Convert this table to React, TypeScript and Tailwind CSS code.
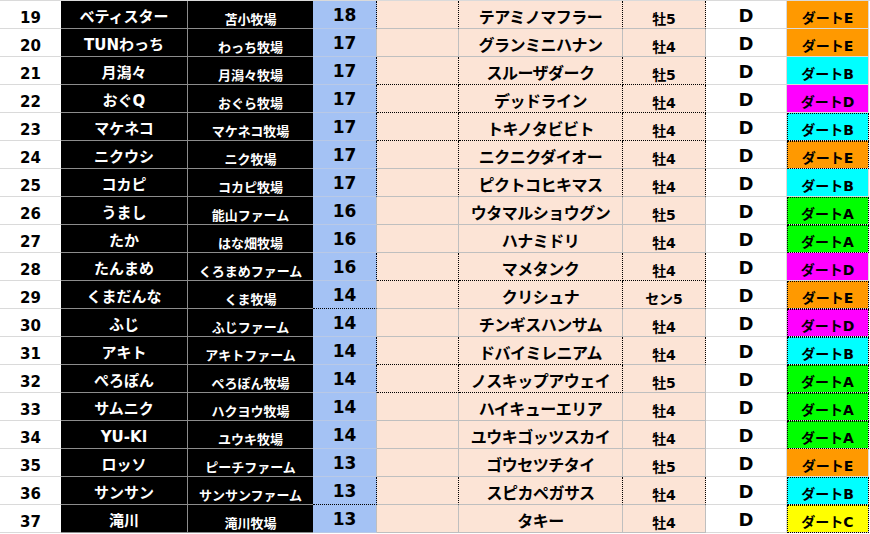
import React from "react";
import clsx from "clsx";

type Row = {
  n: number;
  name: string;
  farm: string;
  pt: number;
  horse: string;
  sex: string;
  dart: string;
  color: "o" | "c" | "m" | "g" | "y";
  v: string; // blueR, blankR, horseR, sexR dotted
  hb: string; // blueB, blankB, horseB, sexB dotted
  dd: boolean;
};

const rows: Row[] = [
  { n: 19, name: "ベティスター", farm: "苫小牧場", pt: 18, horse: "テアミノマフラー", sex: "牡5", dart: "ダートE", color: "o", v: "1111", hb: "0000", dd: false },
  { n: 20, name: "TUNわっち", farm: "わっち牧場", pt: 17, horse: "グランミニハナン", sex: "牡4", dart: "ダートE", color: "o", v: "0000", hb: "0000", dd: false },
  { n: 21, name: "月潟々", farm: "月潟々牧場", pt: 17, horse: "スルーザダーク", sex: "牡5", dart: "ダートB", color: "c", v: "1111", hb: "0111", dd: false },
  { n: 22, name: "おぐQ", farm: "おぐら牧場", pt: 17, horse: "デッドライン", sex: "牡4", dart: "ダートD", color: "m", v: "1111", hb: "0111", dd: false },
  { n: 23, name: "マケネコ", farm: "マケネコ牧場", pt: 17, horse: "トキノタビビト", sex: "牡4", dart: "ダートB", color: "c", v: "1111", hb: "0111", dd: true },
  { n: 24, name: "ニクウシ", farm: "ニク牧場", pt: 17, horse: "ニクニクダイオー", sex: "牡4", dart: "ダートE", color: "o", v: "1111", hb: "0000", dd: true },
  { n: 25, name: "コカピ", farm: "コカピ牧場", pt: 17, horse: "ピクトコヒキマス", sex: "牡4", dart: "ダートB", color: "c", v: "1111", hb: "0000", dd: false },
  { n: 26, name: "うまし", farm: "能山ファーム", pt: 16, horse: "ウタマルショウグン", sex: "牡5", dart: "ダートA", color: "g", v: "0000", hb: "0000", dd: true },
  { n: 27, name: "たか", farm: "はな畑牧場", pt: 16, horse: "ハナミドリ", sex: "牡4", dart: "ダートA", color: "g", v: "0000", hb: "0000", dd: true },
  { n: 28, name: "たんまめ", farm: "くろまめファーム", pt: 16, horse: "マメタンク", sex: "牡4", dart: "ダートD", color: "m", v: "1111", hb: "0111", dd: false },
  { n: 29, name: "くまだんな", farm: "くま牧場", pt: 14, horse: "クリシュナ", sex: "セン5", dart: "ダートE", color: "o", v: "0111", hb: "1000", dd: true },
  { n: 30, name: "ふじ", farm: "ふじファーム", pt: 14, horse: "チンギスハンサム", sex: "牡4", dart: "ダートD", color: "m", v: "0000", hb: "0000", dd: true },
  { n: 31, name: "アキト", farm: "アキトファーム", pt: 14, horse: "ドバイミレニアム", sex: "牡4", dart: "ダートB", color: "c", v: "1111", hb: "0110", dd: true },
  { n: 32, name: "ぺろぽん", farm: "ぺろぽん牧場", pt: 14, horse: "ノスキップアウェイ", sex: "牡5", dart: "ダートA", color: "g", v: "1110", hb: "0110", dd: true },
  { n: 33, name: "サムニク", farm: "ハクヨウ牧場", pt: 14, horse: "ハイキューエリア", sex: "牡4", dart: "ダートA", color: "g", v: "0000", hb: "0000", dd: true },
  { n: 34, name: "YU-KI", farm: "ユウキ牧場", pt: 14, horse: "ユウキゴッツスカイ", sex: "牡4", dart: "ダートA", color: "g", v: "0000", hb: "0000", dd: true },
  { n: 35, name: "ロッソ", farm: "ピーチファーム", pt: 13, horse: "ゴウセツチタイ", sex: "牡5", dart: "ダートE", color: "o", v: "0000", hb: "0000", dd: false },
  { n: 36, name: "サンサン", farm: "サンサンファーム", pt: 13, horse: "スピカペガサス", sex: "牡4", dart: "ダートB", color: "c", v: "1111", hb: "1000", dd: true },
  { n: 37, name: "滝川", farm: "滝川牧場", pt: 13, horse: "タキー", sex: "牡4", dart: "ダートC", color: "y", v: "0000", hb: "0000", dd: true },
];

const dartBg: Record<Row["color"], string> = {
  o: "bg-[#ff9900]",
  c: "bg-[#00ffff]",
  m: "bg-[#ff00ff]",
  g: "bg-[#00ff00]",
  y: "bg-[#ffff00]",
};

function peachCell(i: number, r: Row, width: string) {
  const rd = r.v[i] === "1";
  const bd = r.hb[i] === "1";
  return clsx(
    width,
    "border-r border-b",
    rd ? "border-r-black [border-right-style:dotted]" : "border-r-[#bfbfbf]",
    bd ? "border-b-black [border-bottom-style:dotted]" : "border-b-[#bfbfbf]"
  );
}

export default function App() {
  return (
    <div className="w-[870px] h-[534px] overflow-hidden bg-white border-t border-[#dadada] font-['DejaVu_Sans','Noto_Sans_CJK_JP',sans-serif] font-bold text-black">
      {rows.map((r) => (
        <div key={r.n} className="flex h-[28px]">
          <div className="w-[61px] border-b border-[#dadada] flex items-center justify-center pt-[8px] text-[15px] leading-none">
            {r.n}
          </div>
          <div className="w-[127px] bg-black text-white border-r border-b border-[#8c8c8c] flex items-center justify-center pt-[6px] text-[15px] leading-none">
            {r.name}
          </div>
          <div className="w-[125px] bg-black text-white border-b border-[#8c8c8c] flex items-center justify-center pt-[10px] text-[13px] leading-none">
            {r.farm}
          </div>
          <div
            className={clsx(
              "w-[64px] bg-[#a4c2f4] border-r border-b flex items-center justify-center pt-[2px] text-[17px] leading-none",
              r.v[0] === "1" ? "border-r-black [border-right-style:dotted]" : "border-r-[#bfbfbf]",
              r.hb[0] === "1" ? "border-b-black [border-bottom-style:dotted]" : "border-b-[#b9c9e6]"
            )}
          >
            {r.pt}
          </div>
          <div className={clsx(peachCell(1, r, "w-[82px]"), "bg-[#fce4d6]")} />
          <div
            className={clsx(
              peachCell(2, r, "w-[164px]"),
              "bg-[#fce4d6] flex items-center justify-center pt-[6px] text-[16px] leading-none tracking-[-0.5px]"
            )}
          >
            {r.horse}
          </div>
          <div
            className={clsx(
              peachCell(3, r, "w-[83px]"),
              "bg-[#fce4d6] flex items-center justify-center pt-[8px] text-[14px] leading-none"
            )}
          >
            {r.sex}
          </div>
          <div className="w-[81px] border-r border-b border-[#dadada] flex items-center justify-center pt-[2px] text-[18px] leading-none">
            D
          </div>
          <div
            className={clsx(
              "w-[82px] border-r border-b border-[#dadada] flex items-center justify-center pt-[6px] text-[14px] leading-none",
              dartBg[r.color],
              r.dd && "outline-1 outline-dotted outline-black -outline-offset-1"
            )}
          >
            {r.dart}
          </div>
        </div>
      ))}
    </div>
  );
}
